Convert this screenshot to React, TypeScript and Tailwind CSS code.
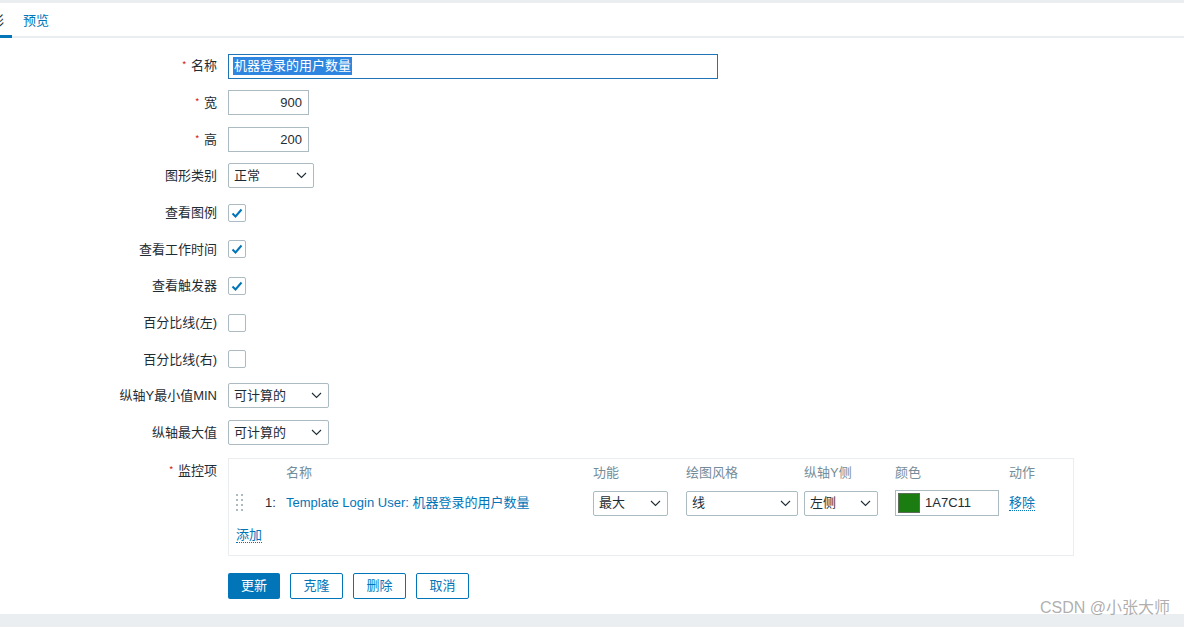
import React from "react";

const Chevron = () => (
  <svg width="11" height="7" viewBox="0 0 11 7" className="shrink-0">
    <polyline points="1,1 5.5,5.5 10,1" fill="none" stroke="#1f2c33" strokeWidth="1.1" />
  </svg>
);

const Select = ({ value, w }: { value: string; w: string }) => (
  <div className={`${w} h-[25px] border border-[#acbbc2] bg-white flex items-center justify-between pl-[5px] pr-[6px] rounded-[2px]`}>
    <span>{value}</span>
    <Chevron />
  </div>
);

const Check = ({ on }: { on: boolean }) => (
  <div className="w-[18px] h-[18px] border border-[#acbbc2] rounded-[2px] bg-white flex items-center justify-center">
    {on && (
      <svg width="14" height="14" viewBox="0 0 14 14">
        <polyline points="2.5,7.5 5.5,10.5 11.5,3.5" fill="none" stroke="#0275b8" strokeWidth="2" />
      </svg>
    )}
  </div>
);

const Req = () => <span className="text-[#d40000] text-[9px] relative -top-[3px] mr-[5px]">*</span>;

const Row = ({ label, req, children }: { label: string; req?: boolean; children: React.ReactNode }) => (
  <div className="flex items-center h-[24px]">
    <div className="w-[217px] shrink-0 text-right mr-[11px]">
      {req && <Req />}
      {label}
    </div>
    {children}
  </div>
);

const Btn = ({ label, primary }: { label: string; primary?: boolean }) => (
  <div
    className={
      primary
        ? "h-[26px] w-[52px] flex items-center justify-center bg-[#0275b8] text-white rounded-[2px]"
        : "h-[26px] w-[53px] flex items-center justify-center border border-[#0275b8] text-[#0275b8] bg-white rounded-[2px]"
    }
  >
    {label}
  </div>
);

export default function App() {
  return (
    <div
      className="relative w-[1184px] h-[627px] bg-white flex flex-col text-[13px] text-[#1f2c33] overflow-hidden"
      style={{ fontFamily: '"Liberation Sans", "Noto Sans CJK SC", sans-serif' }}
    >
      <div className="h-[3px] bg-[#ebeef0] shrink-0" />
      {/* tabs */}
      <div className="h-[35px] shrink-0 border-b-2 border-[#ebeef0] flex items-stretch">
        <div className="w-[12px] overflow-hidden flex justify-end border-b-[3px] border-[#0275b8] -mb-[2px]">
          <span className="pt-[8px] pr-[8px] text-[#1f2c33] whitespace-nowrap">图形</span>
        </div>
        <div className="ml-[11px] pt-[8px] text-[#0275b8]">预览</div>
      </div>

      {/* form */}
      <div className="flex flex-col gap-y-[12.67px] pt-[16px]">
        <Row label="名称" req>
          <div className="w-[490px] h-[25px] border border-[#1f74b5] bg-white flex items-center pl-[4px]">
            <span className="bg-[#2f86e0] text-white leading-[18px] px-[1px]">机器登录的用户数量</span>
          </div>
        </Row>
        <Row label="宽" req>
          <div className="w-[81px] h-[25px] border border-[#acbbc2] bg-white flex items-center justify-end pr-[6px]">900</div>
        </Row>
        <Row label="高" req>
          <div className="w-[81px] h-[25px] border border-[#acbbc2] bg-white flex items-center justify-end pr-[6px]">200</div>
        </Row>
        <Row label="图形类别">
          <Select value="正常" w="w-[86px]" />
        </Row>
        <Row label="查看图例">
          <Check on />
        </Row>
        <Row label="查看工作时间">
          <Check on />
        </Row>
        <Row label="查看触发器">
          <Check on />
        </Row>
        <Row label="百分比线(左)">
          <Check on={false} />
        </Row>
        <Row label="百分比线(右)">
          <Check on={false} />
        </Row>
        <Row label="纵轴Y最小值MIN">
          <Select value="可计算的" w="w-[101px]" />
        </Row>
        <Row label="纵轴最大值">
          <Select value="可计算的" w="w-[101px]" />
        </Row>

        {/* items */}
        <div className="flex items-start mt-[1px]">
          <div className="w-[217px] shrink-0 text-right mr-[11px] pt-[3px]">
            <Req />
            监控项
          </div>
          <div className="w-[846px] h-[98px] border border-[#ebeef0] pl-[7px] pt-[4px]">
            <div className="grid grid-cols-[50px_307px_93px_118px_91px_114px_60px] text-[#768d99] h-[18px] items-center">
              <div />
              <div>名称</div>
              <div>功能</div>
              <div>绘图风格</div>
              <div>纵轴Y侧</div>
              <div>颜色</div>
              <div>动作</div>
            </div>
            <div className="grid grid-cols-[50px_307px_93px_118px_91px_114px_60px] items-center mt-[9px] h-[26px]">
              <div className="flex items-center">
                <svg width="8" height="19" viewBox="0 0 8 19">
                  {[0, 5, 10, 15].map((y) => (
                    <g key={y}>
                      <rect x="0" y={y} width="2" height="2" fill="#acbbc2" />
                      <rect x="5" y={y} width="2" height="2" fill="#acbbc2" />
                    </g>
                  ))}
                </svg>
                <span className="ml-[21px]">1:</span>
              </div>
              <div className="text-[#0275b8] whitespace-nowrap">Template Login User: 机器登录的用户数量</div>
              <div>
                <Select value="最大" w="w-[75px]" />
              </div>
              <div>
                <Select value="线" w="w-[112px]" />
              </div>
              <div>
                <Select value="左侧" w="w-[74px]" />
              </div>
              <div>
                <div className="w-[104px] h-[26px] border border-[#acbbc2] bg-white flex items-center pl-[2px]">
                  <div className="w-[22px] h-[20px] bg-[#1a7c11] border border-[#5c6e5a]" />
                  <span className="ml-[5px]">1A7C11</span>
                </div>
              </div>
              <div>
                <span className="text-[#0275b8] border-b border-dotted border-[#0275b8]">移除</span>
              </div>
            </div>
            <div className="mt-[9px]">
              <span className="text-[#0275b8] border-b border-dotted border-[#0275b8]">添加</span>
            </div>
          </div>
        </div>

        {/* buttons */}
        <div className="flex items-center gap-[10px] ml-[228px] mt-[4px]">
          <Btn label="更新" primary />
          <Btn label="克隆" />
          <Btn label="删除" />
          <Btn label="取消" />
        </div>
      </div>

      <div className="flex-1" />
      <div className="h-[13px] bg-[#ebeef0] shrink-0" />
      <div className="absolute right-[14px] bottom-[7px] text-[16px] text-[#9a9a9a]/80 whitespace-nowrap">CSDN @小张大师</div>
    </div>
  );
}
